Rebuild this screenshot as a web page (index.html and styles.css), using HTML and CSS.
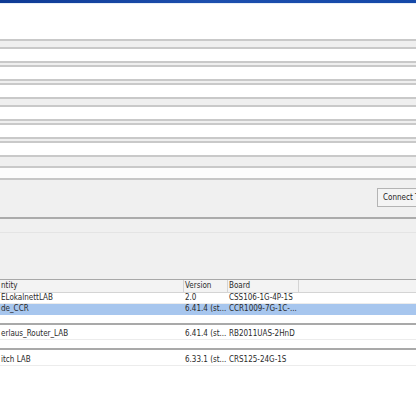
FILE: index.html
```html
<!DOCTYPE html>
<html>
<head>
<meta charset="utf-8">
<link rel="stylesheet" href="styles.css">
</head>
<body>
<div class="page">
  <div class="titlebar"></div>
  <div class="tint"></div>
  <div class="white h35"></div>
  <div class="band b10"></div>
  <div class="white h12"></div>
  <div class="band b6"></div>
  <div class="white h12"></div>
  <div class="band b6"></div>
  <div class="white h12"></div>
  <div class="band b10"></div>
  <div class="white h12"></div>
  <div class="band b6"></div>
  <div class="white h12"></div>
  <div class="band b6"></div>
  <div class="white h12"></div>
  <div class="band b13"></div>
  <div class="dotted"></div>
  <div class="panel">
    <div class="btnrow"><button class="btn">Connect T</button></div>
  </div>
  <div class="panel2"></div>
  <div class="panel3"></div>
  <div class="table">
    <div class="row head">
      <div class="c1">ntity</div><div class="c2">Version</div><div class="c3">Board</div><div class="c4"></div>
    </div>
    <div class="row">
      <div class="c1">ELokalnettLAB</div><div class="c2">2.0</div><div class="c3">CSS106-1G-4P-1S</div><div class="c4"></div>
    </div>
    <div class="row sel">
      <div class="c1">de_CCR</div><div class="c2">6.41.4 (st...</div><div class="c3">CCR1009-7G-1C-...</div><div class="c4"></div>
    </div>
    <div class="gap"></div>
    <div class="sep s5"></div>
    <div class="row tall">
      <div class="c1">erlaus_Router_LAB</div><div class="c2">6.41.4 (st...</div><div class="c3">RB2011UAS-2HnD</div><div class="c4"></div>
    </div>
    <div class="gap"></div>
    <div class="sep s7"></div>
    <div class="row">
      <div class="c1">itch LAB</div><div class="c2">6.33.1 (st...</div><div class="c3">CRS125-24G-1S</div><div class="c4"></div>
    </div>
  </div>
</div>
</body>
</html>
```
FILE: styles.css
```css
* { box-sizing: border-box; }
html, body { margin: 0; padding: 0; }
body { width: 416px; height: 416px; overflow: hidden; background: #ffffff; font-family: "DejaVu Sans Condensed", "DejaVu Sans", sans-serif; font-stretch: condensed; font-size: 8px; color: #2a2a2a; }
.page { display: flex; flex-direction: column; width: 416px; }
.titlebar { height: 3px; background: linear-gradient(to right, #0e3a94, #1d4fae 50%, #1448a8); }
.tint { height: 1px; background: #e6eef8; }
.white { background: #ffffff; }
.h35 { height: 35px; }
.h12 { height: 12px; }
.band { background: #efefef; border-top: 2px solid #c9c9c9; border-bottom: 2px solid #c9c9c9; }
.b10 { height: 10px; }
.b6 { height: 6px; }
.b13 { height: 13px; }
.dotted { height: 12px; background: #fcfcfc; border-bottom: 2px solid #c6c6c6; }
.panel { height: 39px; background: #f0f0f0; border-bottom: 2px solid #ababab; display: flex; justify-content: flex-end; align-items: flex-start; }
.btnrow { padding-top: 8px; }
.btn { width: 44px; height: 19px; margin: 0 -5px 0 0; padding: 0 0 0 5px; text-align: left; white-space: nowrap; overflow: hidden; border: 1px solid #b4b4b4; background: #f4f4f4; font-family: "DejaVu Sans Condensed", "DejaVu Sans", sans-serif; font-stretch: condensed; font-size: 8px; color: #222; }
.panel2 { height: 14px; background: #f0f0f0; border-bottom: 1px solid #e4e4e4; }
.panel3 { height: 47px; background: #f0f0f0; border-bottom: 1px solid #a8a8a8; }
.table { display: flex; flex-direction: column; background: #ffffff; }
.row { display: flex; height: 11px; line-height: 10px; border-bottom: 1px solid #ececec; white-space: nowrap; }
.row > div { overflow: hidden; padding-left: 1px; }
.c1 { width: 184px; }
.c2 { width: 44px; }
.c3 { width: 71px; }
.c4 { flex: 1; }
.head { height: 13px; line-height: 12px; background: #f3f3f3; border-bottom: 1px solid #d4d4d4; }
.head .c1, .head .c2, .head .c3 { border-right: 1px solid #d4d4d4; }
.sel { background: #a7c6ee; border-bottom: none; }
.tall { height: 12px; line-height: 11px; }
.gap { height: 8px; background: #ffffff; }
.sep { background: #ffffff; border-top: 2px solid #a9a9a9; }
.s5 { height: 5px; }
.s7 { height: 7px; }
```
